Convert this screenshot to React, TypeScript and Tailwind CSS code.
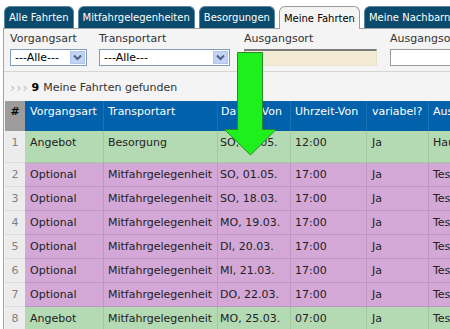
import React from 'react';

const font = { fontFamily: '"DejaVu Sans", Verdana, sans-serif' };

interface Ride {
  nr: number;
  art: string;
  transport: string;
  datum: string;
  zeit: string;
  variabel: string;
  ort: string;
}

const rides: Ride[] = [
  { nr: 1, art: 'Angebot', transport: 'Besorgung', datum: 'SO, 01.05.', zeit: '12:00', variabel: 'Ja', ort: 'Hauptstraße' },
  { nr: 2, art: 'Optional', transport: 'Mitfahrgelegenheit', datum: 'SO, 01.05.', zeit: '17:00', variabel: 'Ja', ort: 'Teststraße' },
  { nr: 3, art: 'Optional', transport: 'Mitfahrgelegenheit', datum: 'SO, 18.03.', zeit: '17:00', variabel: 'Ja', ort: 'Teststraße' },
  { nr: 4, art: 'Optional', transport: 'Mitfahrgelegenheit', datum: 'MO, 19.03.', zeit: '17:00', variabel: 'Ja', ort: 'Teststraße' },
  { nr: 5, art: 'Optional', transport: 'Mitfahrgelegenheit', datum: 'DI, 20.03.', zeit: '17:00', variabel: 'Ja', ort: 'Teststraße' },
  { nr: 6, art: 'Optional', transport: 'Mitfahrgelegenheit', datum: 'MI, 21.03.', zeit: '17:00', variabel: 'Ja', ort: 'Teststraße' },
  { nr: 7, art: 'Optional', transport: 'Mitfahrgelegenheit', datum: 'DO, 22.03.', zeit: '17:00', variabel: 'Ja', ort: 'Teststraße' },
  { nr: 8, art: 'Angebot', transport: 'Mitfahrgelegenheit', datum: 'MO, 25.03.', zeit: '07:00', variabel: 'Ja', ort: 'Teststraße' },
];

const tabs = ['Alle Fahrten', 'Mitfahrgelegenheiten', 'Besorgungen', 'Meine Fahrten', 'Meine Nachbarn'];

const cols = 'grid grid-cols-[20px_79px_114px_73px_76px_62px_1fr]';

function SelectBox({ width }: { width: string }) {
  return (
    <div className={`${width} h-[17px] border border-[#7f9db9] bg-white flex items-center justify-between pl-[4px] pr-[1px]`}>
      <span className="text-[11px] leading-none text-black">---Alle---</span>
      <span className="w-[15px] h-[13px] bg-[#c3d3f3] border border-[#b0c4ec] flex items-center justify-center">
        <svg width="9" height="7" viewBox="0 0 9 7">
          <path d="M1 1.5 L4.5 5 L8 1.5" stroke="#4d6185" strokeWidth="2" fill="none" />
        </svg>
      </span>
    </div>
  );
}

export default function App() {
  return (
    <div className="relative w-[450px] h-[329px] overflow-hidden bg-white text-[#222]" style={font}>
      {/* tabs */}
      <div className="flex items-end gap-[4px] pl-[4px] pt-[6px] h-[28px]">
        {tabs.map((t) =>
          t === 'Meine Fahrten' ? (
            <div
              key={t}
              className="relative z-10 h-[23px] -mb-px px-[4px] rounded-t-[6px] border border-b-0 border-[#9c9c9c] bg-[#f4f4f4] text-black text-[10px] flex items-center whitespace-nowrap shrink-0"
            >
              {t}
            </div>
          ) : (
            <div
              key={t}
              className="h-[22px] px-[4px] rounded-t-[6px] border border-b-0 border-[#5d86a0] bg-[#0a4a6d] text-white text-[10px] flex items-center whitespace-nowrap shrink-0"
            >
              {t}
            </div>
          )
        )}
      </div>

      {/* panel */}
      <div className="ml-[3px] border-t border-l border-[#a3a3a3] bg-[#f4f4f4] h-[301px]">
        <div className="flex pl-[6px] pt-[3px] h-[43px] border-b border-[#d6d6d6]">
          <div className="flex flex-col gap-[4px] w-[89px] shrink-0">
            <span className="text-[11px] leading-[13px] text-[#333]">Vorgangsart</span>
            <SelectBox width="w-[77px]" />
          </div>
          <div className="flex flex-col gap-[4px] w-[145px] shrink-0">
            <span className="text-[11px] leading-[13px] text-[#333]">Transportart</span>
            <SelectBox width="w-[131px]" />
          </div>
          <div className="flex flex-col gap-[4px] w-[146px] shrink-0">
            <span className="text-[11px] leading-[13px] text-[#333]">Ausgangsort</span>
            <div className="w-[133px] h-[17px] bg-[#f3ead3] border-t-2 border-[#7a7a7a] border-l border-l-[#9a9a9a] border-r border-r-[#e6e0cc] border-b border-b-[#ece4cc]" />
          </div>
          <div className="flex flex-col gap-[4px] flex-1 min-w-0 overflow-hidden">
            <span className="text-[11px] leading-[13px] text-[#333] whitespace-nowrap">Ausgangsort</span>
            <div className="h-[17px] bg-white border border-[#9a9a9a] border-r-0" />
          </div>
        </div>

        <div className="flex items-center h-[29px] pt-[3px] pl-[6px] text-[11px]">
          <span className="text-[#bdbdbd] text-[13px] tracking-[1px] mr-[3px]">›››</span>
          <span className="font-bold text-black mr-[4px]">9</span>
          <span className="text-[#333]">Meine Fahrten gefunden</span>
        </div>

        {/* table */}
        <div className="ml-[1px] text-[11px]">
          <div className={`${cols} h-[30px] bg-[#0161aa] text-white`}>
            <div className="bg-[#9c9c9c] text-black font-bold text-center pt-[3px]">#</div>
            <div className="pl-[5px] pt-[3px] border-r border-[#1b73b6]">Vorgangsart</div>
            <div className="pl-[4px] pt-[3px] border-r border-[#1b73b6]">Transportart</div>
            <div className="pl-[3px] pt-[3px] border-r border-[#1b73b6] whitespace-nowrap overflow-hidden">Datum-Von</div>
            <div className="pl-[4px] pt-[3px] border-r border-[#1b73b6] whitespace-nowrap">Uhrzeit-Von</div>
            <div className="pl-[5px] pt-[3px] border-r border-[#1b73b6]">variabel?</div>
            <div className="pl-[4px] pt-[3px] whitespace-nowrap overflow-hidden">Ausgangsort</div>
          </div>
          {rides.map((r) => {
            const green = r.art === 'Angebot';
            const bg = green ? 'bg-[#b4dab4]' : 'bg-[#d3a8d7]';
            const line = green ? 'border-[#a2c8a2]' : 'border-[#bf95c4]';
            return (
              <div key={r.nr} className={`${cols} ${r.nr === 1 ? 'h-[32px]' : 'h-[24px]'}`}>
                <div className="bg-[#ececec] text-[#808080] text-center pt-[4px] border-b border-[#dcdcdc]">{r.nr}</div>
                <div className={`${bg} ${line} border-r border-b pl-[5px] pt-[4px] whitespace-nowrap`}>{r.art}</div>
                <div className={`${bg} ${line} border-r border-b pl-[4px] pt-[4px] whitespace-nowrap`}>{r.transport}</div>
                <div className={`${bg} ${line} border-r border-b pl-[2px] pt-[4px] whitespace-nowrap overflow-hidden`}>{r.datum}</div>
                <div className={`${bg} ${line} border-r border-b pl-[4px] pt-[4px]`}>{r.zeit}</div>
                <div className={`${bg} ${line} border-r border-b pl-[5px] pt-[4px]`}>{r.variabel}</div>
                <div className={`${bg} ${line} border-b pl-[4px] pt-[4px] whitespace-nowrap overflow-hidden`}>{r.ort}</div>
              </div>
            );
          })}
        </div>
      </div>

      {/* green arrow overlay */}
      <svg className="absolute left-[223px] top-[51px]" width="55" height="106" viewBox="0 0 55 106">
        <path
          d="M14.5 1.5 H39.5 V78.5 H53 L27.5 104 L1.5 78.5 H14.5 Z"
          fill="#1ef01e"
          stroke="#2a8a2a"
          strokeWidth="1"
        />
      </svg>
    </div>
  );
}
